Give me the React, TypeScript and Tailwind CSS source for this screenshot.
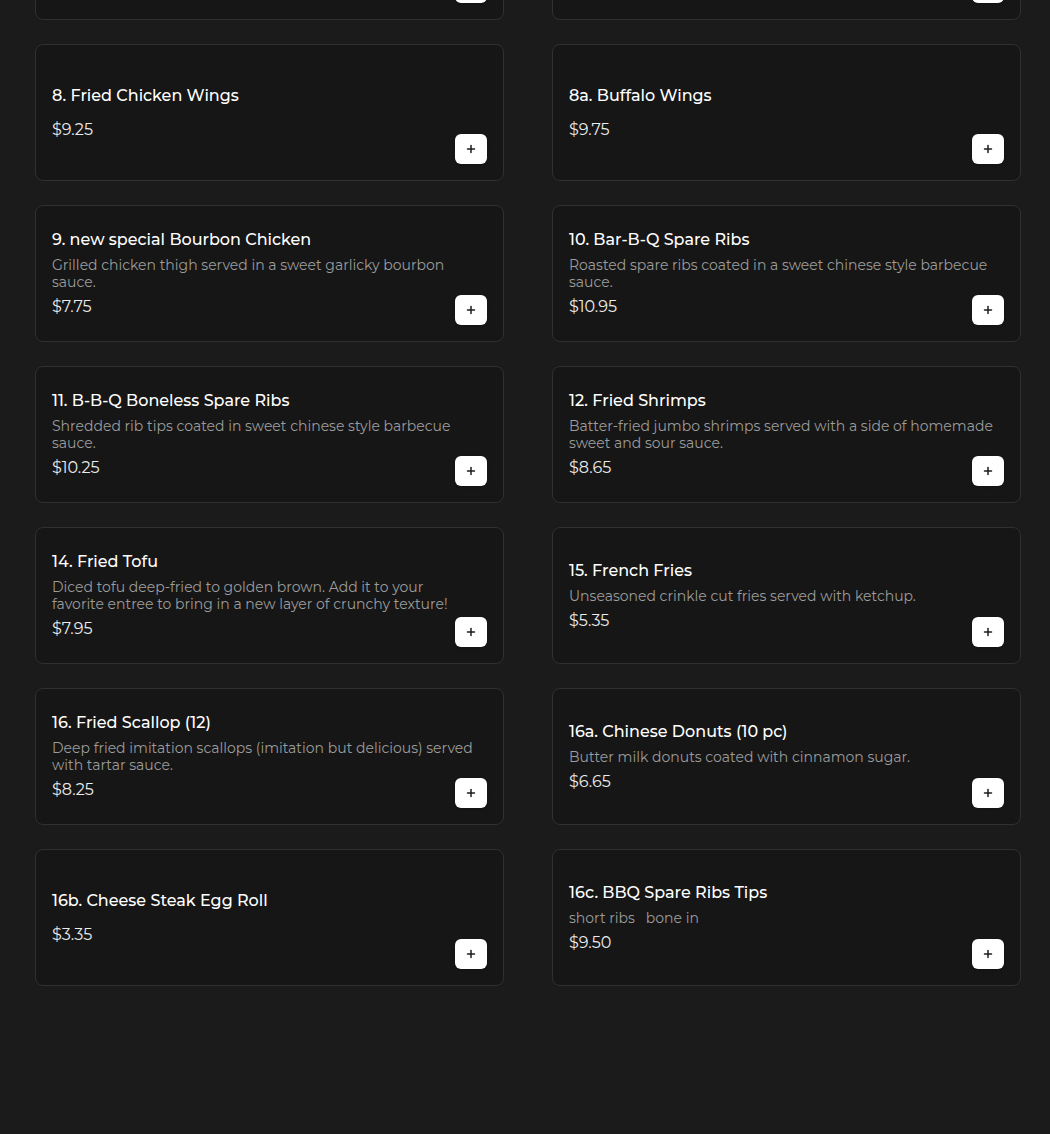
import { Plus } from "lucide-react";

type Item = {
  name: string;
  desc?: string;
  price: string;
};

const items: Item[] = [
  { name: "7. Sesame Chicken", desc: "Crispy chicken tossed in a sweet sesame glaze.", price: "$9.25" },
  { name: "7a. Orange Chicken", desc: "Crispy chicken tossed in a tangy orange sauce.", price: "$9.25" },
  { name: "8. Fried Chicken Wings", price: "$9.25" },
  { name: "8a. Buffalo Wings", price: "$9.75" },
  {
    name: "9. new special Bourbon Chicken",
    desc: "Grilled chicken thigh served in a sweet garlicky bourbon sauce.",
    price: "$7.75",
  },
  {
    name: "10. Bar-B-Q Spare Ribs",
    desc: "Roasted spare ribs coated in a sweet chinese style barbecue sauce.",
    price: "$10.95",
  },
  {
    name: "11. B-B-Q Boneless Spare Ribs",
    desc: "Shredded rib tips coated in sweet chinese style barbecue sauce.",
    price: "$10.25",
  },
  {
    name: "12. Fried Shrimps",
    desc: "Batter-fried jumbo shrimps served with a side of homemade sweet and sour sauce.",
    price: "$8.65",
  },
  {
    name: "14. Fried Tofu",
    desc: "Diced tofu deep-fried to golden brown. Add it to your favorite entree to bring in a new layer of crunchy texture!",
    price: "$7.95",
  },
  {
    name: "15. French Fries",
    desc: "Unseasoned crinkle cut fries served with ketchup.",
    price: "$5.35",
  },
  {
    name: "16. Fried Scallop (12)",
    desc: "Deep fried imitation scallops (imitation but delicious) served with tartar sauce.",
    price: "$8.25",
  },
  {
    name: "16a. Chinese Donuts (10 pc)",
    desc: "Butter milk donuts coated with cinnamon sugar.",
    price: "$6.65",
  },
  { name: "16b. Cheese Steak Egg Roll", price: "$3.35" },
  { name: "16c. BBQ Spare Ribs Tips", desc: "short ribs \u00a0 bone in", price: "$9.50" },
];

function MenuCard({ item }: { item: Item }) {
  return (
    <div className="relative flex h-[137px] items-center rounded-lg border border-[#303030] bg-[#161616] p-4">
      <div className="w-full pr-[10px]">
        <h3 className="text-base leading-6 font-medium text-white">{item.name}</h3>
        {item.desc && (
          <p className="mt-[5px] text-sm leading-[17px] text-[#9c9c9c]">{item.desc}</p>
        )}
        <p
          className={`${item.desc ? "mt-[4px]" : "mt-[10px]"} text-base leading-6 text-[#ececec]`}
        >
          {item.price}
        </p>
      </div>
      <button className="absolute right-4 bottom-4 flex h-[30px] w-8 items-center justify-center rounded-md bg-white text-[#1c1c1c] shadow-sm">
        <Plus className="h-3 w-3" strokeWidth={3} />
      </button>
    </div>
  );
}

export default function App() {
  return (
    <div className="min-h-screen overflow-hidden bg-[#1b1b1b] pr-[29px] pl-[35px] pb-[149px] font-['Montserrat','Open_Sans',sans-serif]">
      <div className="mt-[-117px] grid grid-cols-2 gap-x-12 gap-y-6">
        {items.map((item) => (
          <MenuCard key={item.name} item={item} />
        ))}
      </div>
    </div>
  );
}
